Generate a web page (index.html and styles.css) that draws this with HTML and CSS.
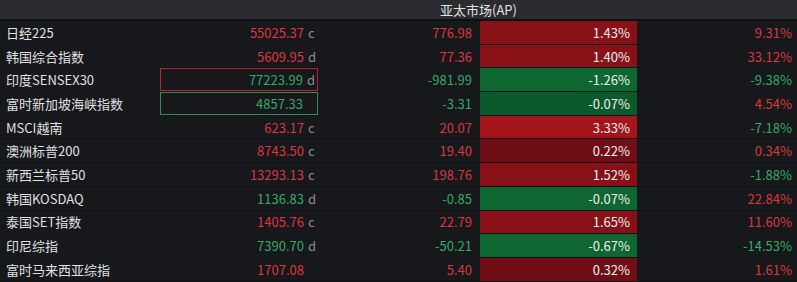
FILE: index.html
```html
<!DOCTYPE html>
<html lang="zh">
<head>
<meta charset="utf-8">
<link rel="stylesheet" href="styles.css">
</head>
<body>
<div class="panel">
  <div class="header"><span class="title">亚太市场(AP)</span></div>
  <div class="rows">
    <div class="row"><div class="name">日经225</div><div class="price up"><span class="num">55025.37</span><span class="sfx">c</span></div><div class="chg up">776.98</div><div class="pct r2">1.43%</div><div class="ytd up">9.31%</div></div>
    <div class="row"><div class="name">韩国综合指数</div><div class="price up"><span class="num">5609.95</span><span class="sfx">d</span></div><div class="chg up">77.36</div><div class="pct r2">1.40%</div><div class="ytd up">33.12%</div></div>
    <div class="row"><div class="name">印度SENSEX30</div><div class="price down box-red"><span class="num">77223.99</span><span class="sfx">d</span></div><div class="chg down">-981.99</div><div class="pct g2">-1.26%</div><div class="ytd down">-9.38%</div></div>
    <div class="row"><div class="name">富时新加坡海峡指数</div><div class="price down box-green"><span class="num">4857.33</span><span class="sfx"></span></div><div class="chg down">-3.31</div><div class="pct g1">-0.07%</div><div class="ytd up">4.54%</div></div>
    <div class="row"><div class="name">MSCI越南</div><div class="price up"><span class="num">623.17</span><span class="sfx">c</span></div><div class="chg up">20.07</div><div class="pct r3">3.33%</div><div class="ytd down">-7.18%</div></div>
    <div class="row"><div class="name">澳洲标普200</div><div class="price up"><span class="num">8743.50</span><span class="sfx">c</span></div><div class="chg up">19.40</div><div class="pct r1">0.22%</div><div class="ytd up">0.34%</div></div>
    <div class="row"><div class="name">新西兰标普50</div><div class="price up"><span class="num">13293.13</span><span class="sfx">c</span></div><div class="chg up">198.76</div><div class="pct r2">1.52%</div><div class="ytd down">-1.88%</div></div>
    <div class="row"><div class="name">韩国KOSDAQ</div><div class="price down"><span class="num">1136.83</span><span class="sfx">d</span></div><div class="chg down">-0.85</div><div class="pct g2">-0.07%</div><div class="ytd up">22.84%</div></div>
    <div class="row"><div class="name">泰国SET指数</div><div class="price up"><span class="num">1405.76</span><span class="sfx">c</span></div><div class="chg up">22.79</div><div class="pct r2">1.65%</div><div class="ytd up">11.60%</div></div>
    <div class="row"><div class="name">印尼综指</div><div class="price down"><span class="num">7390.70</span><span class="sfx">d</span></div><div class="chg down">-50.21</div><div class="pct g2">-0.67%</div><div class="ytd down">-14.53%</div></div>
    <div class="row"><div class="name">富时马来西亚综指</div><div class="price up"><span class="num">1707.08</span><span class="sfx"></span></div><div class="chg up">5.40</div><div class="pct r1">0.32%</div><div class="ytd up">1.61%</div></div>
  </div>
</div>
</body>
</html>
```
FILE: styles.css
```css
* { box-sizing: border-box; }
html, body {
  margin: 0;
  padding: 0;
  background: #16181c;
}
body {
  width: 797px;
  height: 282px;
  overflow: hidden;
  font-family: "Noto Sans CJK SC", "Noto Sans", sans-serif;
  font-size: 13px;
  color: #dcdcdc;
}
.panel {
  display: flex;
  flex-direction: column;
}
.header {
  height: 21px;
  background: #2a2c30;
  border-bottom: 2px solid #0f1013;
  display: flex;
  align-items: center;
  padding-left: 440px;
}
.title {
  color: #e2e2e2;
  font-size: 13px;
  line-height: 19px;
}
.row {
  display: grid;
  grid-template-columns: 160px 158px 162px 157px 160px;
  height: 23.7px;
  border-bottom: 1px solid #121317;
}
.row > div {
  display: flex;
  align-items: center;
  line-height: 1;
  white-space: nowrap;
}
.name {
  padding-left: 6px;
  color: #e0e0e0;
}
.price {
  justify-content: flex-end;
  padding-right: 2px;
}
.sfx {
  width: 12px;
  padding-left: 4px;
  color: #8a8c90;
}
.chg {
  justify-content: flex-end;
  padding-right: 8px;
}
.pct {
  justify-content: flex-end;
  padding-right: 7px;
  color: #eeeeee;
}
.ytd {
  justify-content: flex-end;
  padding-right: 5px;
}
.up { color: #dc373d; }
.down { color: #35aa63; }
.r1 { background: #6f0f15; }
.r2 { background: #881117; }
.r3 { background: #a3141b; }
.g1 { background: #0c5a2b; }
.g2 { background: #0e6731; }
.box-red { border: 1px solid #b3262e; }
.box-green { border: 1px solid #2e8c55; }
```
